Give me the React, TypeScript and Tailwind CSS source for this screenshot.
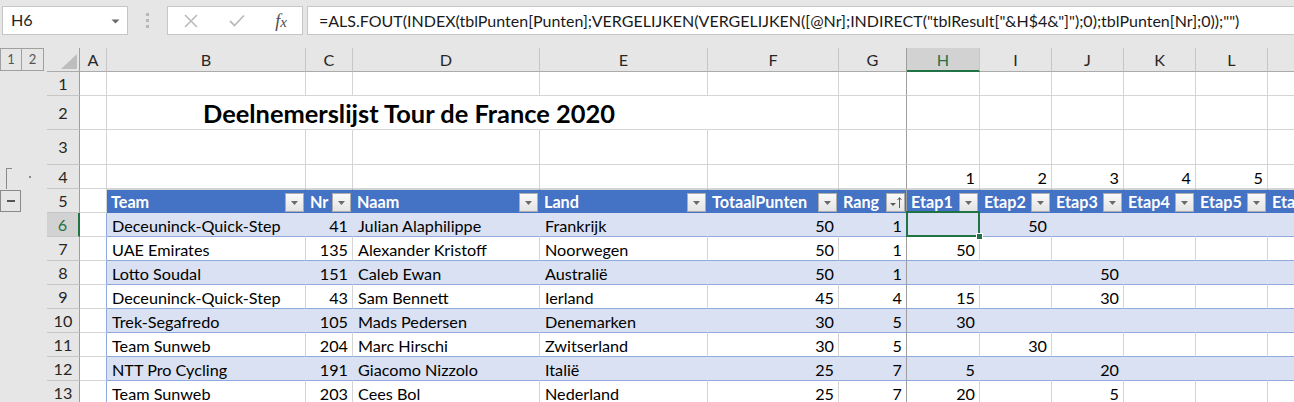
import React from 'react';

const GRID =
  'grid grid-cols-[47px_33px_27px_199px_47px_187px_168px_131px_68px_73px_72px_72px_72px_72px_72px]';

const LETTERS = ['A', 'B', 'C', 'D', 'E', 'F', 'G', 'H', 'I', 'J', 'K', 'L', 'M'];

type V = string | number;
const DATA: { r: number; team: string; nr: number; naam: string; land: string; tot: number; rang: number; et: V[] }[] = [
  { r: 6, team: 'Deceuninck-Quick-Step', nr: 41, naam: 'Julian Alaphilippe', land: 'Frankrijk', tot: 50, rang: 1, et: ['', 50, '', '', '', ''] },
  { r: 7, team: 'UAE Emirates', nr: 135, naam: 'Alexander Kristoff', land: 'Noorwegen', tot: 50, rang: 1, et: [50, '', '', '', '', ''] },
  { r: 8, team: 'Lotto Soudal', nr: 151, naam: 'Caleb Ewan', land: 'Australië', tot: 50, rang: 1, et: ['', '', 50, '', '', ''] },
  { r: 9, team: 'Deceuninck-Quick-Step', nr: 43, naam: 'Sam Bennett', land: 'Ierland', tot: 45, rang: 4, et: [15, '', 30, '', '', ''] },
  { r: 10, team: 'Trek-Segafredo', nr: 105, naam: 'Mads Pedersen', land: 'Denemarken', tot: 30, rang: 5, et: [30, '', '', '', '', ''] },
  { r: 11, team: 'Team Sunweb', nr: 204, naam: 'Marc Hirschi', land: 'Zwitserland', tot: 30, rang: 5, et: ['', 30, '', '', '', ''] },
  { r: 12, team: 'NTT Pro Cycling', nr: 191, naam: 'Giacomo Nizzolo', land: 'Italië', tot: 25, rang: 7, et: [5, '', 20, '', '', ''] },
  { r: 13, team: 'Team Sunweb', nr: 203, naam: 'Cees Bol', land: 'Nederland', tot: 25, rang: 7, et: [20, '', 5, '', '', ''] },
];

function Gutter({ children }: { children?: React.ReactNode }) {
  return <div className="relative bg-[#E6E6E6]">{children}</div>;
}

function RowHead({ n, sel }: { n: number; sel?: boolean }) {
  return sel ? (
    <div className="flex items-center justify-center pt-[2px] bg-[#D2D2D2] text-[#217346] border-b border-[#C6C6C6] border-r-2 border-r-[#217346]">
      {n}
    </div>
  ) : (
    <div className="flex items-center justify-center pt-[1px] bg-[#E6E6E6] text-[#262626] border-b border-[#C6C6C6] border-r border-r-[#9E9E9E]">
      {n}
    </div>
  );
}

function Plain({ v, right, freeze, children, className = '' }: { v?: V; right?: boolean; freeze?: boolean; children?: React.ReactNode; className?: string }) {
  return (
    <div
      className={`relative flex items-center pt-[3px] whitespace-nowrap bg-white border-b border-[#D4D4D4] border-r ${
        freeze ? 'border-r-[#9E9E9E]' : 'border-r-[#D4D4D4]'
      } ${right ? 'justify-end pr-[4px]' : 'pl-[5px]'} ${className}`}
    >
      {v}
      {children}
    </div>
  );
}

function DropBtn({ sort }: { sort?: boolean }) {
  return (
    <div className="absolute right-[1px] top-[3px] w-[19px] h-[19px] bg-gradient-to-b from-[#FAFAFA] to-[#E4E4E4] border border-[#ADADAD] flex items-center justify-center">
      {sort ? (
        <svg width="15" height="13" viewBox="0 0 15 13">
          <path d="M2 7 L8 7 L5 10 Z" fill="#5C5C5C" />
          <path d="M11.5 12 L11.5 2" stroke="#5C5C5C" strokeWidth="1" />
          <path d="M9.5 4 L11.5 1.5 L13.5 4" stroke="#5C5C5C" strokeWidth="1" fill="none" />
        </svg>
      ) : (
        <svg width="9" height="6" viewBox="0 0 9 6">
          <path d="M1 1 L8 1 L4.5 5 Z" fill="#6A6A6A" />
        </svg>
      )}
    </div>
  );
}

function HeadCell({ label, freeze, sort, noBtn }: { label: string; freeze?: boolean; sort?: boolean; noBtn?: boolean }) {
  return (
    <div
      className={`relative flex items-center pt-[2px] whitespace-nowrap overflow-hidden bg-[#4472C4] text-white font-bold pl-[4px] border-t border-t-[#D4D4D4] border-r ${
        freeze ? 'border-r-[#9E9E9E]' : 'border-r-[#4472C4]'
      }`}
    >
      {label}
      {!noBtn && <DropBtn sort={sort} />}
    </div>
  );
}

function DataCell({ v, right, band, freeze, children }: { v?: V; right?: boolean; band: boolean; freeze?: boolean; children?: React.ReactNode }) {
  const rcol = freeze ? 'border-r-[#9E9E9E]' : band ? 'border-r-[#D9E1F2]' : 'border-r-[#D4D4D4]';
  return (
    <div
      className={`relative flex items-center pt-[3px] whitespace-nowrap ${band ? 'bg-[#D9E1F2]' : 'bg-white'} border-b border-b-[#8EA9DB] border-r ${rcol} ${
        right ? 'justify-end pr-[4px]' : 'pl-[5px]'
      }`}
    >
      {v}
      {children}
    </div>
  );
}

function FormulaBar() {
  return (
    <div className="h-[48px] bg-[#E6E6E6] flex items-start pt-[6px]">
      <div className="ml-[2px] w-[126px] h-[29px] bg-white border border-[#C6C6C6] flex items-center pl-[8px] relative text-[#262626]">
        H6
        <svg className="absolute right-[7px] top-[12px]" width="9" height="5" viewBox="0 0 9 5">
          <path d="M0.5 0.5 L8.5 0.5 L4.5 4.5 Z" fill="#6A6A6A" />
        </svg>
      </div>
      <div className="w-[39px] h-[29px] flex flex-col items-center justify-center gap-[3px]">
        <div className="w-[3px] h-[3px] bg-[#B8B8B8]" />
        <div className="w-[3px] h-[3px] bg-[#B8B8B8]" />
        <div className="w-[3px] h-[3px] bg-[#B8B8B8]" />
      </div>
      <div className="w-[136px] h-[29px] bg-white border border-[#C6C6C6] flex items-center">
        <div className="w-[46px] flex justify-center ml-[0px]">
          <svg width="14" height="14" viewBox="0 0 14 14">
            <path d="M1 1 L13 13 M13 1 L1 13" stroke="#BCBCBC" strokeWidth="1.6" />
          </svg>
        </div>
        <div className="w-[46px] flex justify-center">
          <svg width="16" height="13" viewBox="0 0 16 13">
            <path d="M1 7 L5.5 11.5 L15 1.5" stroke="#BCBCBC" strokeWidth="1.8" fill="none" />
          </svg>
        </div>
        <div className="w-[42px] flex justify-center font-['Liberation_Serif',serif] italic text-[18px] text-[#4D4D4D]">
          <span>f</span>
          <span className="text-[15px] mt-[3px]">x</span>
        </div>
      </div>
      <div className="ml-[4px] flex-1 h-[29px] bg-white border border-[#C6C6C6] border-r-0 flex items-center pl-[11px] text-[#1A1A1A] text-[16px] whitespace-nowrap overflow-hidden">
        =ALS.FOUT(INDEX(tblPunten[Punten];VERGELIJKEN(VERGELIJKEN([@Nr];INDIRECT("tblResult["&amp;H$4&amp;"]");0);tblPunten[Nr];0));"")
      </div>
    </div>
  );
}

export default function App() {
  const etapLabels = ['Etap1', 'Etap2', 'Etap3', 'Etap4', 'Etap5', 'Etap6'];
  return (
    <div className="w-[1294px] h-[402px] overflow-hidden bg-[#E6E6E6] font-['Lato','Liberation_Sans',sans-serif] text-[16.2px] leading-none text-[#000]">
      <FormulaBar />
      <div className="w-[1294px] overflow-hidden">
        {/* column header row */}
        <div className={`${GRID} h-[24px]`}>
          <Gutter>
            <div className="absolute left-0 top-0 flex">
              <div className="w-[22px] h-[23px] border border-[#A0A0A0] flex items-center justify-center text-[13px] text-[#555]">1</div>
              <div className="w-[22px] h-[23px] border border-[#A0A0A0] border-l-0 flex items-center justify-center text-[13px] text-[#555]">2</div>
            </div>
          </Gutter>
          <div className="relative bg-[#E6E6E6] border-b border-[#ABABAB] border-r border-r-[#9E9E9E]">
            <svg className="absolute right-[2px] bottom-[2px]" width="16" height="15" viewBox="0 0 16 15">
              <path d="M16 0 L16 15 L0 15 Z" fill="#BDBDBD" />
            </svg>
          </div>
          {LETTERS.map((l) =>
            l === 'H' ? (
              <div key={l} className="flex items-center justify-center pt-[2px] bg-[#D2D2D2] text-[#217346] border-r border-r-[#C6C6C6] border-b-2 border-b-[#217346]">
                {l}
              </div>
            ) : (
              <div
                key={l}
                className={`flex items-center justify-center pt-[2px] bg-[#E6E6E6] text-[#262626] border-b border-[#ABABAB] border-r ${
                  l === 'G' ? 'border-r-[#9E9E9E]' : 'border-r-[#C6C6C6]'
                }`}
              >
                {l === 'M' ? '' : l}
              </div>
            )
          )}
        </div>

        {/* row 1 */}
        <div className={`${GRID} h-[24px]`}>
          <Gutter />
          <RowHead n={1} />
          {LETTERS.map((l) => (
            <Plain key={l} freeze={l === 'G'} />
          ))}
        </div>

        {/* row 2 */}
        <div className={`${GRID} h-[34px]`}>
          <Gutter />
          <RowHead n={2} />
          {LETTERS.map((l) =>
            l === 'B' ? (
              <Plain key={l} className="overflow-visible z-10 border-r-0">
                <span className="absolute left-[96px] top-[5px] font-bold text-[25.4px] whitespace-nowrap">
                  Deelnemerslijst Tour de France 2020
                </span>
              </Plain>
            ) : (
              <Plain key={l} freeze={l === 'G'} className={l === 'C' || l === 'D' || l === 'E' ? 'border-r-white' : ''} />
            )
          )}
        </div>

        {/* row 3 */}
        <div className={`${GRID} h-[35px]`}>
          <Gutter />
          <RowHead n={3} />
          {LETTERS.map((l) => (
            <Plain key={l} freeze={l === 'G'} />
          ))}
        </div>

        {/* row 4 */}
        <div className={`${GRID} h-[24px]`}>
          <Gutter>
            <div className="absolute left-[6px] top-[3px] w-[6px] h-[21px] border-l border-t border-[#8A8A8A]" />
            <div className="absolute left-[29px] top-[11px] w-[2px] h-[2px] bg-[#8A8A8A]" />
          </Gutter>
          <RowHead n={4} />
          {LETTERS.map((l, i) => (
            <Plain key={l} right v={i >= 7 && i <= 11 ? i - 6 : ''} freeze={l === 'G'} />
          ))}
        </div>

        {/* row 5: table header */}
        <div className={`${GRID} h-[24px]`}>
          <Gutter>
            <div className="absolute left-0 top-[1px] w-[21px] h-[22px] border border-[#8A8A8A] flex items-center justify-center">
              <div className="w-[8px] h-[2px] bg-[#555]" />
            </div>
          </Gutter>
          <RowHead n={5} />
          <Plain />
          <HeadCell label="Team" />
          <HeadCell label="Nr" />
          <HeadCell label="Naam" />
          <HeadCell label="Land" />
          <HeadCell label="TotaalPunten" />
          <HeadCell label="Rang" sort freeze />
          {etapLabels.map((e, i) => (
            <HeadCell key={e} label={i === 5 ? 'Etap6' : e} />
          ))}
        </div>

        {/* data rows */}
        {DATA.map((d) => {
          const band = d.r % 2 === 0;
          const sel = d.r === 6;
          return (
            <div key={d.r} className={`${GRID} h-[24px]`}>
              <Gutter />
              <RowHead n={d.r} sel={sel} />
              <div className="bg-white border-b border-b-[#D4D4D4] border-r border-r-[#8EA9DB]" />
              <DataCell band={band} v={d.team} />
              <DataCell band={band} v={d.nr} right />
              <DataCell band={band} v={d.naam} />
              <DataCell band={band} v={d.land} />
              <DataCell band={band} v={d.tot} right />
              <DataCell band={band} v={d.rang} right freeze />
              {d.et.map((v, i) => (
                <DataCell key={i} band={band} v={v} right>
                  {sel && i === 0 && (
                    <>
                      <div className="absolute left-[-1px] top-[-2px] right-[-1px] bottom-[-1px] border-2 border-[#217346] z-20" />
                      <div className="absolute right-[-4px] bottom-[-4px] w-[7px] h-[7px] bg-[#217346] border border-white z-30" />
                    </>
                  )}
                </DataCell>
              ))}
            </div>
          );
        })}
      </div>
    </div>
  );
}
